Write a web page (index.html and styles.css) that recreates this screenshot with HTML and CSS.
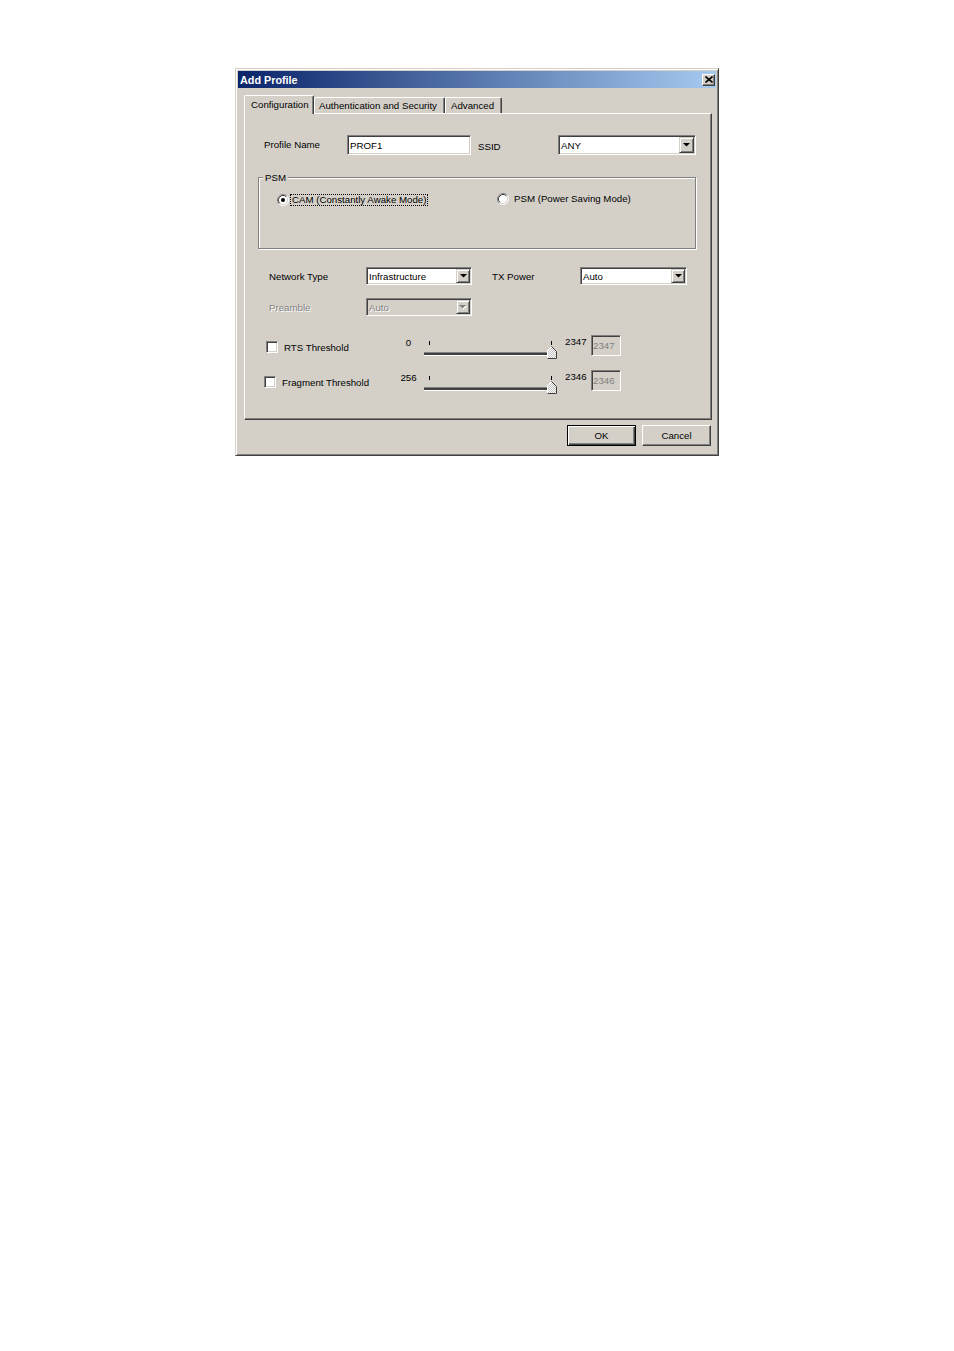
FILE: index.html
```html
<!DOCTYPE html>
<html>
<head>
<meta charset="utf-8">
<title>Add Profile</title>
<link rel="stylesheet" href="styles.css">
</head>
<body>
<div class="dialog">
  <div class="titlebar">
    <span class="title">Add Profile</span>
    <span class="close-btn"><svg width="8" height="7" viewBox="0 0 8 7"><path d="M0.5 0.5 L7.5 6.5 M7.5 0.5 L0.5 6.5" stroke="#000" stroke-width="1.6" fill="none"/></svg></span>
  </div>
  <div class="tabs">
    <div class="tab tab-active">Configuration</div>
    <div class="tab tab-auth">Authentication and Security</div>
    <div class="tab tab-adv">Advanced</div>
  </div>
  <div class="panel">
    <div class="row row-profile">
      <span class="lbl-profile">Profile Name</span>
      <div class="edit edit-profile">PROF1</div>
      <span class="lbl-ssid">SSID</span>
      <div class="combo combo-ssid">
        <span class="combo-text">ANY</span>
        <span class="combo-btn"><svg width="7" height="4" viewBox="0 0 7 4"><path d="M0 0 H7 L3.5 3.5 Z" fill="#000"/></svg></span>
      </div>
    </div>

    <div class="group">
      <span class="group-legend">PSM</span>
      <div class="radio-item radio-cam">
        <svg class="radio" width="12" height="12" viewBox="0 0 12 12">
          <circle cx="6" cy="6" r="5" fill="#fff"/>
          <path d="M2.11 9.89 A5.5 5.5 0 0 1 9.89 2.11" stroke="#808080" fill="none"/>
          <path d="M9.89 2.11 A5.5 5.5 0 0 1 2.11 9.89" stroke="#fff" fill="none"/>
          <path d="M2.82 9.18 A4.5 4.5 0 0 1 9.18 2.82" stroke="#404040" fill="none"/>
          <path d="M9.18 2.82 A4.5 4.5 0 0 1 2.82 9.18" stroke="#d4d0c8" fill="none"/>
          <circle cx="6" cy="6" r="2" fill="#000"/>
        </svg>
        <span class="radio-label focus">CAM (Constantly Awake Mode)</span>
      </div>
      <div class="radio-item radio-psm">
        <svg class="radio" width="12" height="12" viewBox="0 0 12 12">
          <circle cx="6" cy="6" r="5" fill="#fff"/>
          <path d="M2.11 9.89 A5.5 5.5 0 0 1 9.89 2.11" stroke="#808080" fill="none"/>
          <path d="M9.89 2.11 A5.5 5.5 0 0 1 2.11 9.89" stroke="#fff" fill="none"/>
          <path d="M2.82 9.18 A4.5 4.5 0 0 1 9.18 2.82" stroke="#404040" fill="none"/>
          <path d="M9.18 2.82 A4.5 4.5 0 0 1 2.82 9.18" stroke="#d4d0c8" fill="none"/>
        </svg>
        <span class="radio-label">PSM (Power Saving Mode)</span>
      </div>
    </div>

    <div class="row row-net">
      <span class="lbl-net">Network Type</span>
      <div class="combo combo-net">
        <span class="combo-text">Infrastructure</span>
        <span class="combo-btn"><svg width="7" height="4" viewBox="0 0 7 4"><path d="M0 0 H7 L3.5 3.5 Z" fill="#000"/></svg></span>
      </div>
      <span class="lbl-tx">TX Power</span>
      <div class="combo combo-tx">
        <span class="combo-text">Auto</span>
        <span class="combo-btn"><svg width="7" height="4" viewBox="0 0 7 4"><path d="M0 0 H7 L3.5 3.5 Z" fill="#000"/></svg></span>
      </div>
    </div>

    <div class="row row-pre">
      <span class="lbl-net disabled">Preamble</span>
      <div class="combo combo-net combo-disabled">
        <span class="combo-text disabled">Auto</span>
        <span class="combo-btn"><svg width="8" height="5" viewBox="0 0 8 5"><path d="M1 1 H8 L4.5 4.5 Z" fill="#fff"/><path d="M0 0 H7 L3.5 3.5 Z" fill="#808080"/></svg></span>
      </div>
    </div>

    <div class="row row-thr row-rts">
      <div class="chk-cell">
        <span class="checkbox chk-rts"></span>
        <span class="chk-label">RTS Threshold</span>
      </div>
      <span class="thr-min">0</span>
      <div class="slider">
        <span class="tick tick-min"></span>
        <span class="tick tick-max"></span>
        <span class="slider-track"></span>
        <svg class="thumb" width="10" height="13" viewBox="0 0 10 13">
          <defs><pattern id="chk1" width="2" height="2" patternUnits="userSpaceOnUse"><rect width="2" height="2" fill="#fff"/><rect width="1" height="1" fill="#c0c0c0"/><rect x="1" y="1" width="1" height="1" fill="#c0c0c0"/></pattern></defs>
          <path d="M1 12 V4.5 L4.5 1 L9 5.5 V12 Z" fill="url(#chk1)"/>
          <path d="M0.5 12.5 V4.5 L4.5 0.5" stroke="#fff" fill="none"/>
          <path d="M4.5 0.5 L9.5 5.5 V12.5 H0.5" stroke="#404040" fill="none"/>
        </svg>
      </div>
      <span class="thr-max">2347</span>
      <div class="edit edit-num">2347</div>
    </div>

    <div class="row row-thr row-frag">
      <div class="chk-cell">
        <span class="checkbox chk-frag"></span>
        <span class="chk-label">Fragment Threshold</span>
      </div>
      <span class="thr-min">256</span>
      <div class="slider">
        <span class="tick tick-min"></span>
        <span class="tick tick-max"></span>
        <span class="slider-track"></span>
        <svg class="thumb" width="10" height="13" viewBox="0 0 10 13">
          <defs><pattern id="chk2" width="2" height="2" patternUnits="userSpaceOnUse"><rect width="2" height="2" fill="#fff"/><rect width="1" height="1" fill="#c0c0c0"/><rect x="1" y="1" width="1" height="1" fill="#c0c0c0"/></pattern></defs>
          <path d="M1 12 V4.5 L4.5 1 L9 5.5 V12 Z" fill="url(#chk2)"/>
          <path d="M0.5 12.5 V4.5 L4.5 0.5" stroke="#fff" fill="none"/>
          <path d="M4.5 0.5 L9.5 5.5 V12.5 H0.5" stroke="#404040" fill="none"/>
        </svg>
      </div>
      <span class="thr-max">2346</span>
      <div class="edit edit-num">2346</div>
    </div>
  </div>
  <div class="buttons">
    <div class="btn btn-default">OK</div>
    <div class="btn">Cancel</div>
  </div>
</div>
</body>
</html>
```
FILE: styles.css
```css
* { box-sizing: border-box; }

body {
  margin: 0;
  background: #fff;
  font-family: "Liberation Sans", Arial, sans-serif;
  font-size: 9.7px;
  color: #000;
}

.dialog {
  width: 484px;
  height: 388px;
  margin: 68px 0 0 235px;
  background: #d4d0c8;
  border: 1px solid;
  border-color: #d4d0c8 #404040 #404040 #d4d0c8;
  box-shadow: inset 1px 1px #fff, inset -1px -1px #808080;
  padding: 2px;
}

.titlebar {
  height: 17px;
  display: flex;
  align-items: center;
  justify-content: space-between;
  background: linear-gradient(to right, #0a246a, #a6caf0);
  padding: 0 1px 0 2px;
}

.title {
  color: #fff;
  font-weight: bold;
  font-size: 10.8px;
}

.close-btn {
  width: 13px;
  height: 12px;
  display: flex;
  align-items: center;
  justify-content: center;
  background: #d4d0c8;
  border: 1px solid;
  border-color: #fff #404040 #404040 #fff;
  box-shadow: inset -1px -1px #808080;
}

.tabs {
  display: flex;
  align-items: flex-end;
  height: 18px;
  margin: 7px 0 0 6px;
}

.tab {
  height: 16px;
  line-height: 14px;
  padding-top: 1px;
  border: 1px solid;
  border-bottom: none;
  border-color: #fff #404040 #404040 #fff;
  box-shadow: inset -1px 0 #808080;
  border-radius: 2px 2px 0 0;
  white-space: nowrap;
  background: #d4d0c8;
}

.tab-active {
  height: 19px;
  line-height: 16px;
  padding-top: 1px;
  margin-bottom: -1px;
  position: relative;
  z-index: 1;
  width: 70px;
  padding-left: 6px;
}

.tab-auth { width: 131px; padding-left: 4px; }
.tab-adv { width: 57px; padding-left: 5px; }

.panel {
  width: 468px;
  height: 307px;
  margin-left: 6px;
  border: 1px solid;
  border-color: #fff #404040 #404040 #fff;
  box-shadow: inset -1px -1px #808080;
}

.row { display: flex; }

.row-profile {
  margin-top: 21px;
  height: 20px;
  align-items: center;
}

.lbl-profile { margin-left: 19px; width: 83px; padding-bottom: 2px; }

.edit {
  height: 20px;
  background: #fff;
  border: 1px solid;
  border-color: #808080 #fff #fff #808080;
  box-shadow: inset 1px 1px #404040, inset -1px -1px #d4d0c8;
  padding-left: 2px;
  display: flex;
  align-items: center;
}

.edit-profile { width: 124px; }

.lbl-ssid { margin-left: 7px; width: 80px; padding-top: 2px; }

.combo {
  display: flex;
  height: 18px;
  background: #fff;
  border: 1px solid;
  border-color: #808080 #fff #fff #808080;
  box-shadow: inset 1px 1px #404040, inset -1px -1px #d4d0c8;
  padding: 1px;
}

.combo-text {
  flex: 1;
  display: flex;
  align-items: center;
  padding-left: 1px;
}

.combo-btn {
  width: 14px;
  display: flex;
  align-items: center;
  justify-content: center;
  background: #d4d0c8;
  border: 1px solid;
  border-color: #d4d0c8 #404040 #404040 #d4d0c8;
  box-shadow: inset 1px 1px #fff, inset -1px -1px #808080;
}

.combo-ssid { width: 138px; height: 20px; }
.combo-ssid .combo-btn { width: 15px; }

.combo-disabled { background: #d4d0c8; }

.disabled {
  color: #808080;
  text-shadow: 1px 1px 0 #fff;
}

.group {
  position: relative;
  margin: 22px 0 0 13px;
  width: 438px;
  height: 72px;
  border: 1px solid #808080;
  box-shadow: inset 1px 1px #fff, 1px 1px #fff;
  display: flex;
  align-items: flex-start;
  padding: 16px 0 0 18px;
}

.group-legend {
  position: absolute;
  left: 4px;
  top: -6px;
  padding: 0 2px;
  background: #d4d0c8;
  line-height: 12px;
}

.radio-item {
  display: flex;
  align-items: center;
}

.radio { flex: none; display: block; }

.radio-cam { width: 220px; }
.radio-psm { margin-top: -1px; }

.radio-label { line-height: 10px; white-space: nowrap; }

.radio-cam .radio-label {
  margin-left: 2px;
  padding: 0 1px;
  outline: 1px dotted #000;
}

.radio-psm .radio-label { margin-left: 5px; }

.row-net {
  margin-top: 18px;
  height: 18px;
  align-items: center;
}

.lbl-net { margin-left: 24px; width: 97px; }
.combo-net { width: 106px; }
.lbl-tx { margin-left: 20px; width: 88px; }
.combo-tx { width: 107px; }

.row-pre {
  margin-top: 13px;
  height: 18px;
  align-items: center;
}

.row-thr {
  height: 24px;
  align-items: flex-start;
}

.row-rts { margin-top: 19px; }
.row-frag { margin-top: 11px; }

.chk-cell {
  width: 155px;
  height: 12px;
  margin-top: 6px;
  display: flex;
  align-items: center;
}

.checkbox {
  flex: none;
  width: 12px;
  height: 12px;
  background: #fff;
  border: 1px solid;
  border-color: #808080 #fff #fff #808080;
  box-shadow: inset 1px 1px #404040, inset -1px -1px #d4d0c8;
}

.chk-rts { margin-left: 21px; }
.chk-frag { margin-left: 19px; }

.chk-label { margin-left: 6px; white-space: nowrap; }

.thr-min {
  width: 17px;
  text-align: center;
  margin-top: 2px;
  line-height: 12px;
}

.slider {
  position: relative;
  width: 143px;
  height: 24px;
}

.slider-track {
  position: absolute;
  left: 7px;
  top: 17px;
  width: 124px;
  height: 4px;
  border-top: 1px solid #808080;
  border-bottom: 1px solid #fff;
  background: #404040;
}

.tick {
  position: absolute;
  top: 6px;
  width: 1px;
  height: 4px;
  background: #000;
}

.tick-min { left: 12px; }
.tick-max { left: 134px; }

.thumb {
  position: absolute;
  left: 130px;
  top: 11px;
}

.thr-max {
  width: 26px;
  margin-left: 5px;
  margin-top: 1px;
  line-height: 12px;
}

.edit-num {
  width: 30px;
  height: 21px;
  background: #d4d0c8;
  color: #808080;
  padding-left: 1px;
}

.buttons {
  display: flex;
  justify-content: flex-end;
  gap: 6px;
  margin: 5px 5px 0 0;
}

.btn {
  width: 69px;
  height: 21px;
  display: flex;
  align-items: center;
  justify-content: center;
  border: 1px solid;
  border-color: #fff #404040 #404040 #fff;
  box-shadow: inset -1px -1px #808080;
}

.btn-default {
  border: 1px solid #000;
  box-shadow: inset 1px 1px #fff, inset -1px -1px #404040, inset -2px -2px #808080;
}
```
